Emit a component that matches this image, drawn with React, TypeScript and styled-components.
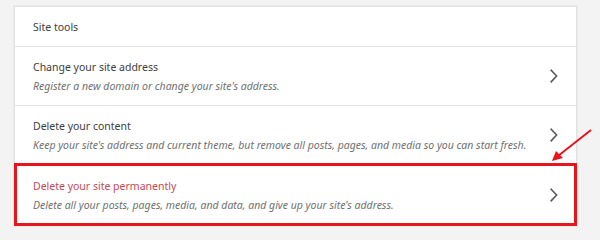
import React from 'react';
import styled, { createGlobalStyle } from 'styled-components';

const GlobalStyle = createGlobalStyle`
  html, body {
    margin: 0;
    padding: 0;
    background: #f3f3f3;
  }
  body {
    font-family: "Noto Sans", "Open Sans", Arial, sans-serif;
    -webkit-font-smoothing: antialiased;
  }
`;

interface ToolRow {
  title: string;
  description: string;
  danger?: boolean;
}

const rows: ToolRow[] = [
  {
    title: 'Change your site address',
    description: "Register a new domain or change your site's address.",
  },
  {
    title: 'Delete your content',
    description:
      "Keep your site's address and current theme, but remove all posts, pages, and media so you can start fresh.",
  },
  {
    title: 'Delete your site permanently',
    description: "Delete all your posts, pages, media, and data, and give up your site's address.",
    danger: true,
  },
];

const Chevron = () => (
  <svg width="8" height="14" viewBox="0 0 8 14" fill="none">
    <path d="M1.2 1.2 L6.6 7 L1.2 12.8" stroke="#5a5a5a" strokeWidth="1.6" strokeLinecap="square" />
  </svg>
);

const App: React.FC = () => {
  return (
    <Page>
      <GlobalStyle />
      <Card>
        <Header>Site tools</Header>
        {rows.map((row) => (
          <Row key={row.title} $highlight={row.danger}>
            <RowText>
              <RowTitle $danger={row.danger}>{row.title}</RowTitle>
              <RowDescription>{row.description}</RowDescription>
            </RowText>
            <Chevron />
          </Row>
        ))}
      </Card>
      <Pointer width="50" height="40" viewBox="0 0 50 40">
        <line x1="43" y1="3" x2="10" y2="29" stroke="#e8141b" strokeWidth="2" />
        <polygon points="4,34 8,24 15,31" fill="#e8141b" />
      </Pointer>
    </Page>
  );
};

const Page = styled.div`
  position: relative;
  width: 600px;
  height: 240px;
  box-sizing: border-box;
  padding: 6px 23px 0 14px;
  overflow: hidden;
`;

const Card = styled.div`
  background: #fff;
  border: 1px solid #e1e2e2;
  box-shadow: 0 0 0 1px #eaeaea;
`;

const Header = styled.div`
  height: 39px;
  display: flex;
  align-items: center;
  padding-left: 18px;
  font-size: 10.5px;
  color: #3d3d3d;
  border-bottom: 1px solid #e4e4e4;
`;

const Row = styled.div<{ $highlight?: boolean }>`
  display: flex;
  align-items: center;
  justify-content: space-between;
  height: 58px;
  padding: 0 18px 0 18px;
  border-top: 1px solid #e4e4e4;
  &:nth-of-type(2) {
    border-top: none;
  }
  outline: ${(p) => (p.$highlight ? '3px solid #e8141b' : 'none')};
  outline-offset: -2px;
  ${(p) => (p.$highlight ? 'height: 60px;' : '')}
`;

const RowText = styled.div`
  display: flex;
  flex-direction: column;
  gap: 4px;
`;

const RowTitle = styled.div<{ $danger?: boolean }>`
  font-size: 10.5px;
  line-height: 15px;
  color: ${(p) => (p.$danger ? '#c64a53' : '#3d3d3d')};
`;

const RowDescription = styled.div`
  font-size: 10.5px;
  line-height: 14px;
  font-style: italic;
  color: #717171;
`;

const Pointer = styled.svg`
  position: absolute;
  left: 548px;
  top: 127px;
`;

export default App;
